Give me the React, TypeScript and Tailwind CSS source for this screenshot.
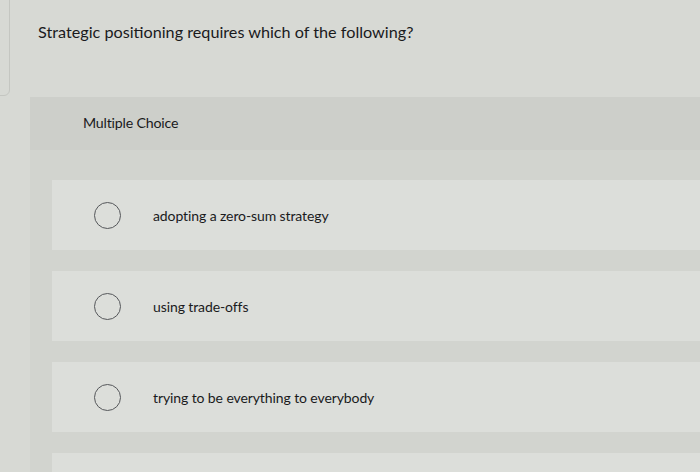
import React from 'react';

const options = [
  'adopting a zero-sum strategy',
  'using trade-offs',
  'trying to be everything to everybody',
  '',
];

const Radio = () => (
  <span className="block w-[27px] h-[27px] rounded-full border-[1.5px] border-[#55575a] shrink-0" />
);

export default function App() {
  return (
    <div className="relative w-[700px] h-[472px] overflow-hidden bg-[#d7d9d4] font-['Lato',sans-serif] text-[#1a1a1c]">
      {/* faint card edge on the left */}
      <div className="absolute left-[-20px] top-[-10px] w-[30px] h-[106px] rounded-md border border-[#c4c6c1]" />

      <h1 className="pt-[21px] pl-[38px] text-[16.2px] leading-[22px]">
        Strategic positioning requires which of the following?
      </h1>

      <div className="mt-[54px] ml-[30px] bg-[#d2d4cf]">
        <div className="h-[53px] bg-[#cdcfca] pl-[53px] pt-[15px] text-[14.2px] tracking-[-0.2px]">
          Multiple Choice
        </div>
        <div className="flex flex-col gap-[21px] pt-[30px] pl-[22px]">
          {options.map((text, i) => (
            <div key={i} className="h-[70px] bg-[#dcdeda] flex items-center">
              <div className="pl-[42px] pr-[32px]">
                <Radio />
              </div>
              <span className="text-[14px] tracking-[-0.1px]">{text}</span>
            </div>
          ))}
        </div>
      </div>
    </div>
  );
}
